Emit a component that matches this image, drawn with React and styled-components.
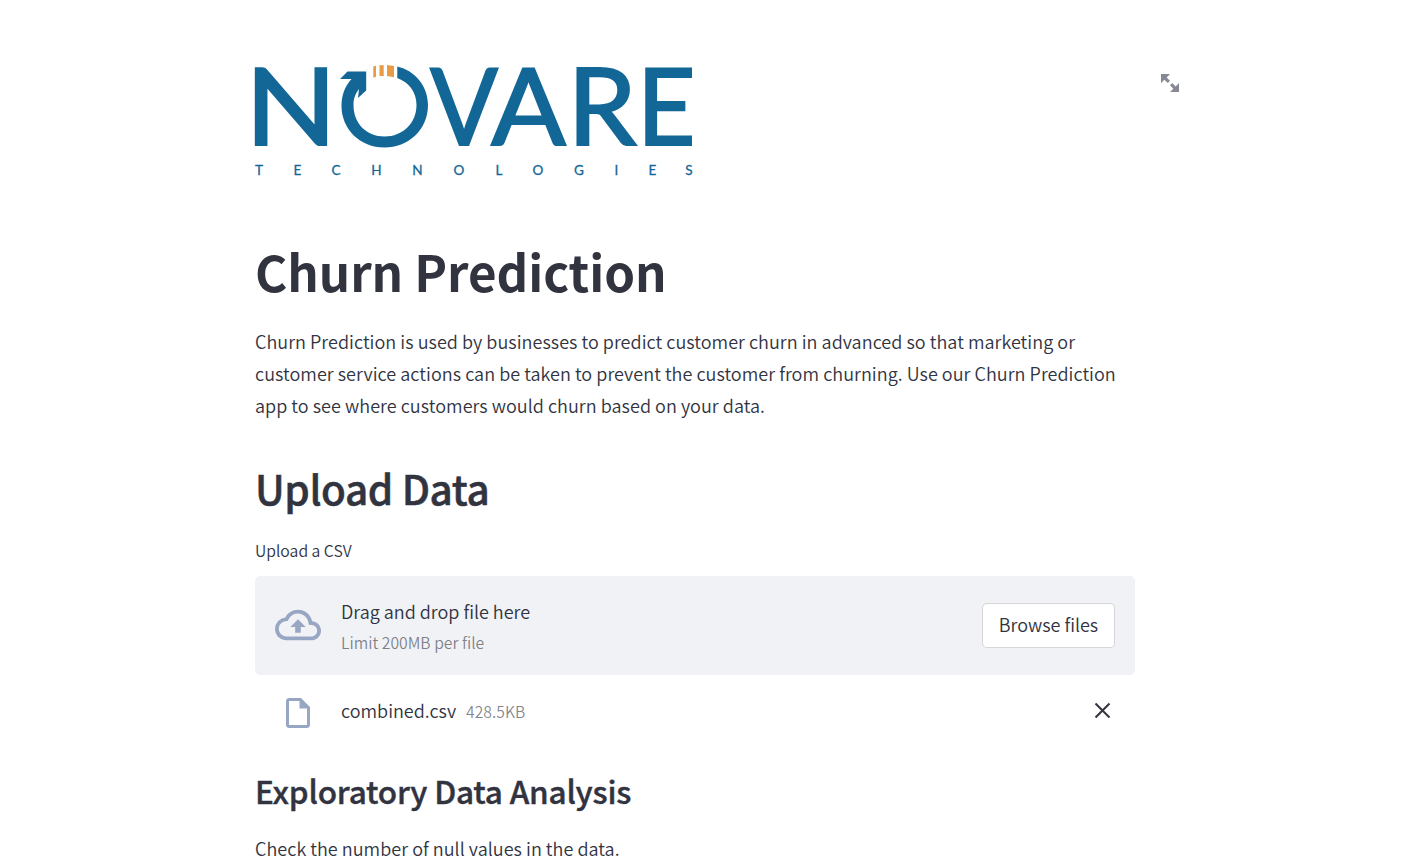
import React from "react";
import styled, { createGlobalStyle } from "styled-components";

const GlobalStyle = createGlobalStyle`
  * { box-sizing: border-box; }
  html, body { margin: 0; background: #fff; }
  body {
    height: 860px;
    overflow: hidden;
    color: #31333f;
    font-family: "Noto Sans CJK SC", "Noto Sans", sans-serif;
    font-size: 18px;
    font-weight: 350;
    line-height: 32px;
  }
`;

const Page = styled.main`
  width: 880px;
  margin-left: 255px;
  padding-top: 60px;
`;

const LogoRow = styled.header`
  position: relative;
  height: 120px;
`;

const Logo = styled.svg`
  display: block;
  width: 438px;
  height: 120px;
  overflow: visible;
`;

const Fullscreen = styled.button`
  position: absolute;
  top: 14px;
  right: -44px;
  padding: 0;
  border: 0;
  background: none;
  line-height: 0;
`;

const Title = styled.h1`
  margin: 58px 0 0;
  font-size: 49.3px;
  font-weight: 700;
  letter-spacing: -0.05px;
  line-height: 66px;
`;

const Paragraph = styled.p`
  margin: ${(p) => p.$top}px 0 0;
  letter-spacing: 0.04px;
`;

const Heading = styled.h2`
  margin: 40px 0 0;
  font-size: 40.5px;
  font-weight: 500;
  letter-spacing: -0.4px;
  line-height: 54px;
  -webkit-text-stroke: 0.5px currentColor;
`;

const SubHeading = styled.h3`
  margin: 36px 0 0;
  font-size: 31.5px;
  font-weight: 500;
  letter-spacing: -0.2px;
  line-height: 42px;
  -webkit-text-stroke: 0.4px currentColor;
`;

const Label = styled.label`
  display: block;
  margin-top: 24px;
  font-size: 15.75px;
  line-height: 24px;
`;

const Dropzone = styled.section`
  display: flex;
  align-items: center;
  height: 99px;
  margin-top: 13px;
  padding: 0 20px 1px;
  border-radius: 5px;
  background: #f0f2f6;
`;

const IconSlot = styled.span`
  display: flex;
  justify-content: center;
  width: 46px;
  margin-right: 20px;
  color: #97a6c3;
`;

const Instructions = styled.div`
  display: flex;
  flex: 1;
  flex-direction: column;
  padding-top: 3px;
`;

const Small = styled.small`
  color: rgba(49, 51, 63, 0.6);
  font-size: 15.75px;
  line-height: 31px;
`;

const BrowseButton = styled.button`
  width: 133px;
  height: 45px;
  padding: 0 0 3px;
  border: 1px solid rgba(49, 51, 63, 0.2);
  border-radius: 5px;
  background: #fff;
  color: inherit;
  font: inherit;
`;

const FileRow = styled.div`
  display: flex;
  align-items: center;
  height: 40px;
  margin-top: 18px;
  padding: 0 20px;
`;

const FileName = styled.span`
  margin-right: 10px;
  padding-bottom: 7px;
`;

const FileSize = styled(Small)`
  padding-bottom: 4px;
`;

const DeleteButton = styled.button`
  margin-left: auto;
  padding: 0 0 5px;
  border: 0;
  background: none;
  color: inherit;
  line-height: 0;
`;

const letters = [
  { ch: "N", x: -10, w: 92 },
  { ch: "V", x: 175.3, w: 67.5 },
  { ch: "A", x: 236.2, w: 74.5 },
  { ch: "R", x: 312.5, w: 69 },
  { ch: "E", x: 382, w: 58.5 },
];

const tagline = [
  ["T", 4], ["E", 42.5], ["C", 81], ["H", 121.5], ["N", 162.5], ["O", 204],
  ["L", 244], ["O", 283], ["G", 324], ["I", 361.5], ["E", 397.5], ["S", 434],
];

function NovareLogo() {
  return (
    <Logo viewBox="0 0 438 120" role="img" aria-label="Novare Technologies">
      <g fill="#136797" fontFamily="Lato, sans-serif">
        {letters.map(({ ch, x, w }) => (
          <text
            key={ch}
            x={x}
            y="84.700"
            fontSize="106.500"
            fontWeight="400"
            stroke="#136797"
            strokeWidth="2.100"
            textLength={w}
            lengthAdjust="spacingAndGlyphs"
          >
            {ch}
          </text>
        ))}
        {tagline.map(([ch, x], i) => (
          <text key={i} x={x} y="115" fontSize="13.500" fontWeight="400" stroke="#136797" strokeWidth="0.300" textAnchor="middle">
            {ch}
          </text>
        ))}
      </g>
      <path
        d="M142.300 6.500C160 10.500 173 26 173 45C173 70 153 87.500 129.500 87.500C105 87.500 86.500 69 86.500 46C86.500 35 90 26 96.500 19H85L92.500 11.500H111.200V30.500L103 38L104 29C100 34 98.500 39 98.500 45C98.500 64 112 76.500 129.500 76.500C148 76.500 161.500 63 161.500 45C161.500 32 154 22.500 142.300 18Z"
        fill="#136797"
      />
      <g fill="#e99a45">
        <path d="M118.300 6.500l2.700-.7v11l-2.700.9z" />
        <path d="M124.500 5.200h4.200v10.800h-4.200z" />
        <path d="M132 5l7 1v11.300l-7-1.300z" />
      </g>
    </Logo>
  );
}

export default function App() {
  return (
    <>
      <GlobalStyle />
      <Page>
        <LogoRow>
          <NovareLogo />
          <Fullscreen aria-label="View fullscreen">
            <svg width="18" height="18" viewBox="0 0 8 8" fill="#868993">
              <path d="M0 0v4l1.500-1.500L3 4l1-1-1.500-1.500L4 0H0zM5 4L4 5l1.500 1.500L4 8h4V4L6.500 5.500z" />
            </svg>
          </Fullscreen>
        </LogoRow>
        <Title>Churn Prediction</Title>
        <Paragraph $top={21}>
          Churn Prediction is used by businesses to predict customer churn in advanced so that marketing or
          customer service actions can be taken to prevent the customer from churning. Use our Churn Prediction
          app to see where customers would churn based on your data.
        </Paragraph>
        <Heading>Upload Data</Heading>
        <Label>Upload a CSV</Label>
        <Dropzone>
          <IconSlot>
            <svg width="46" height="46" viewBox="0 0 24 24" fill="currentColor">
              <path d="M19.350 10.040A7.490 7.490 0 0 0 12 4C9.110 4 6.600 5.640 5.350 8.040A5.994 5.994 0 0 0 0 14c0 3.310 2.690 6 6 6h13c2.760 0 5-2.240 5-5 0-2.640-2.050-4.780-4.650-4.960zM19 18H6c-2.210 0-4-1.790-4-4 0-2.050 1.530-3.760 3.560-3.970l1.070-.110.5-.950A5.469 5.469 0 0 1 12 6c2.620 0 4.880 1.860 5.390 4.430l.3 1.500 1.530.110A2.980 2.980 0 0 1 22 15c0 1.650-1.350 3-3 3zM8 13h2.550v3h2.900v-3H16l-4-4z" />
            </svg>
          </IconSlot>
          <Instructions>
            <span>Drag and drop file here</span>
            <Small>Limit 200MB per file</Small>
          </Instructions>
          <BrowseButton>Browse files</BrowseButton>
        </Dropzone>
        <FileRow>
          <IconSlot>
            <svg width="36" height="36" viewBox="0 0 24 24" fill="currentColor">
              <path d="M6 2c-1.100 0-1.990.9-1.990 2L4 20c0 1.100.890 2 1.990 2H18c1.100 0 2-.9 2-2V8l-6-6H6zm0 2h7v5h5v11H6z" />
            </svg>
          </IconSlot>
          <FileName>combined.csv</FileName>
          <FileSize>428.5KB</FileSize>
          <DeleteButton aria-label="Remove file">
            <svg width="25" height="25" viewBox="0 0 25 25" fill="none" stroke="currentColor" strokeWidth="2">
              <path d="M5.500 5.500l14 14M19.500 5.500l-14 14" />
            </svg>
          </DeleteButton>
        </FileRow>
        <SubHeading>Exploratory Data Analysis</SubHeading>
        <Paragraph $top={21}>Check the number of null values in the data.</Paragraph>
      </Page>
    </>
  );
}
